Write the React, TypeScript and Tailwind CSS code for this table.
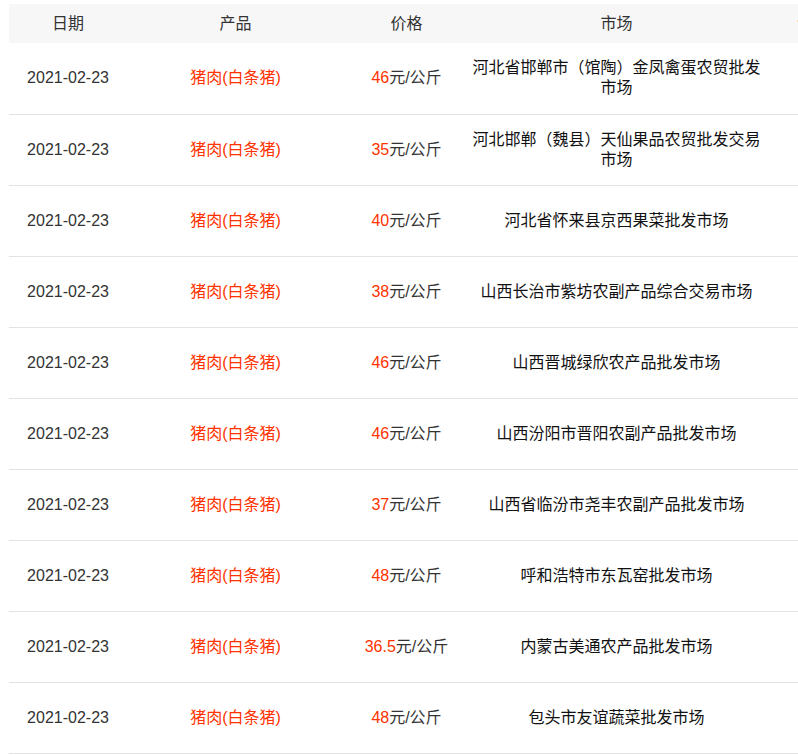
const rows = [
  { date: '2021-02-23', product: '猪肉(白条猪)', price: '46', market: '河北省邯郸市（馆陶）金凤禽蛋农贸批发市场' },
  { date: '2021-02-23', product: '猪肉(白条猪)', price: '35', market: '河北邯郸（魏县）天仙果品农贸批发交易市场' },
  { date: '2021-02-23', product: '猪肉(白条猪)', price: '40', market: '河北省怀来县京西果菜批发市场' },
  { date: '2021-02-23', product: '猪肉(白条猪)', price: '38', market: '山西长治市紫坊农副产品综合交易市场' },
  { date: '2021-02-23', product: '猪肉(白条猪)', price: '46', market: '山西晋城绿欣农产品批发市场' },
  { date: '2021-02-23', product: '猪肉(白条猪)', price: '46', market: '山西汾阳市晋阳农副产品批发市场' },
  { date: '2021-02-23', product: '猪肉(白条猪)', price: '37', market: '山西省临汾市尧丰农副产品批发市场' },
  { date: '2021-02-23', product: '猪肉(白条猪)', price: '48', market: '呼和浩特市东瓦窑批发市场' },
  { date: '2021-02-23', product: '猪肉(白条猪)', price: '36.5', market: '内蒙古美通农产品批发市场' },
  { date: '2021-02-23', product: '猪肉(白条猪)', price: '48', market: '包头市友谊蔬菜批发市场' },
]

export default function App() {
  return (
    <div
      className="w-[798px] h-[755px] overflow-hidden bg-white pl-[9px] pt-1 text-[16px] leading-5 text-[#333]"
      style={{ fontFamily: '"Liberation Sans", Arial, "Noto Sans CJK SC", sans-serif' }}
    >
      <table className="table-fixed border-collapse w-[853px] text-center">
        <colgroup>
          <col className="w-[118px]" />
          <col className="w-[217px]" />
          <col className="w-[125px]" />
          <col className="w-[295px]" />
          <col className="w-[98px]" />
        </colgroup>
        <thead>
          <tr className="bg-[#f7f7f7] h-[39px]">
            <th className="font-normal">日期</th>
            <th className="font-normal">产品</th>
            <th className="font-normal">价格</th>
            <th className="font-normal">市场</th>
            <th className="font-normal text-[#c8a060]">详情</th>
          </tr>
        </thead>
        <tbody>
          {rows.map((r, i) => (
            <tr key={i} className="h-[71px] border-b border-[#e3e3e3]">
              <td>{r.date}</td>
              <td className="text-[#ff3300]">{r.product}</td>
              <td>
                <span className="text-[#ff3300]">{r.price}</span>元/公斤
              </td>
              <td className="px-0 text-[#111]">{r.market}</td>
              <td></td>
            </tr>
          ))}
        </tbody>
      </table>
    </div>
  )
}
